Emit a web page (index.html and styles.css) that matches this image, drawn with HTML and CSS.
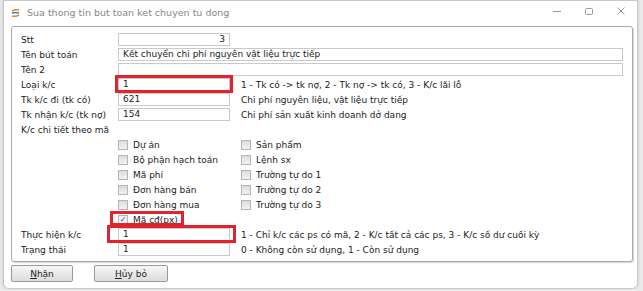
FILE: index.html
```html
<!DOCTYPE html>
<html lang="vi">
<head>
    <meta charset="UTF-8">
    <title>Sua thong tin but toan ket chuyen tu dong</title>
    <link rel="stylesheet" href="styles.css">
</head>
<body>
    <div class="window">
        <div class="titlebar">
            <svg class="app-icon" width="9" height="8" viewBox="0 0 9 8">
                <path d="M1 2 Q4 0 8 1" stroke="#f08a1c" stroke-width="1.6" fill="none"/>
                <path d="M1 4 Q4 3 8 4" stroke="#2a7fd4" stroke-width="1.6" fill="none"/>
                <path d="M1 7 Q5 8 8 6" stroke="#f08a1c" stroke-width="1.6" fill="none"/>
            </svg>
            <span class="title">Sua thong tin but toan ket chuyen tu dong</span>
            <div class="controls">
                <svg width="10" height="10" viewBox="0 0 10 10"><path d="M1 5.5H9" stroke="#999" stroke-width="1"/></svg>
                <svg width="10" height="10" viewBox="0 0 10 10"><rect x="1.5" y="2.5" width="7" height="6" stroke="#999" fill="none" rx="1"/></svg>
                <svg width="10" height="10" viewBox="0 0 10 10"><path d="M1.5 1.5L8.5 8.5M8.5 1.5L1.5 8.5" stroke="#999" stroke-width="1"/></svg>
            </div>
        </div>

        <div class="panel">
            <div class="row">
                <label>Stt</label>
                <div class="field num">3</div>
            </div>
            <div class="row">
                <label>Tên bút toán</label>
                <div class="field wide">Kết chuyển chi phí nguyên vật liệu trực tiếp</div>
            </div>
            <div class="row">
                <label>Tên 2</label>
                <div class="field wide"></div>
            </div>
            <div class="row">
                <label>Loại k/c</label>
                <div class="field">1</div>
                <span class="desc">1 - Tk có -&gt; tk nợ, 2 - Tk nợ -&gt; tk có, 3 - K/c lãi lỗ</span>
            </div>
            <div class="row">
                <label>Tk k/c đi (tk có)</label>
                <div class="field">621</div>
                <span class="desc">Chi phí nguyên liệu, vật liệu trực tiếp</span>
            </div>
            <div class="row">
                <label>Tk nhận k/c (tk nợ)</label>
                <div class="field">154</div>
                <span class="desc">Chi phí sản xuất kinh doanh dở dang</span>
            </div>
            <div class="row">
                <label class="long">K/c chi tiết theo mã</label>
            </div>

            <div class="checks">
                <div class="col">
                    <div class="check"><span class="box"></span>Dự án</div>
                    <div class="check"><span class="box"></span>Bộ phận hạch toán</div>
                    <div class="check"><span class="box"></span>Mã phí</div>
                    <div class="check"><span class="box"></span>Đơn hàng bán</div>
                    <div class="check"><span class="box"></span>Đơn hàng mua</div>
                    <div class="check"><span class="box on">&#10003;</span>Mã cđ(px)</div>
                </div>
                <div class="col">
                    <div class="check"><span class="box"></span>Sản phẩm</div>
                    <div class="check"><span class="box"></span>Lệnh sx</div>
                    <div class="check"><span class="box"></span>Trường tự do 1</div>
                    <div class="check"><span class="box"></span>Trường tự do 2</div>
                    <div class="check"><span class="box"></span>Trường tự do 3</div>
                </div>
            </div>

            <div class="row">
                <label>Thực hiện k/c</label>
                <div class="field">1</div>
                <span class="desc">1 - Chỉ k/c các ps có mã, 2 - K/c tất cả các ps, 3 - K/c số dư cuối kỳ</span>
            </div>
            <div class="row">
                <label>Trạng thái</label>
                <div class="field">1</div>
                <span class="desc">0 - Không còn sử dụng, 1 - Còn sử dụng</span>
            </div>

            <!-- red highlight marks -->
            <div class="mark mark-loai"></div>
            <div class="mark mark-cd"></div>
            <div class="mark mark-thuchien"></div>
        </div>

        <div class="buttons">
            <button class="btn btn-ok"><u>N</u>hận</button>
            <button class="btn btn-cancel"><u>H</u>ủy bỏ</button>
        </div>
    </div>
</body>
</html>
```

FILE: styles.css
```css
body {
    margin: 0;
    background: #e9e9e9;
    font-family: Tahoma, "DejaVu Sans", sans-serif;
    font-size: 9px;
    color: #222;
}
.window {
    margin-left: 3px;
    width: 635px;
    height: 289px;
    background: #fff;
    border: 1px solid #c8c8c8;
    border-radius: 0 0 6px 6px;
    box-sizing: border-box;
    box-shadow: 0 0 3px rgba(0,0,0,0.15);
}
.titlebar {
    height: 25px;
    display: flex;
    align-items: center;
    padding-left: 7px;
}
.app-icon {
    margin-right: 7px;
    margin-top: -2px;
}
.title {
    color: #888;
    font-size: 9.5px;
    margin-top: -2px;
}
.controls {
    margin-left: auto;
    display: flex;
    gap: 22px;
    padding-right: 11px;
    margin-top: -5px;
}
.panel {
    position: relative;
    margin-left: 7px;
    width: 622px;
    height: 236px;
    box-sizing: border-box;
    border: 1px solid #a9a9a9;
    border-radius: 3px;
    box-shadow: 1px 1px 1px #d4d4d4;
    padding: 5px 8px 0 9px;
}
.row {
    display: flex;
    align-items: center;
    height: 15px;
}
.row label {
    width: 97px;
    flex: none;
}
.row label.long {
    width: 200px;
}
.field {
    width: 112px;
    height: 13px;
    box-sizing: border-box;
    border: 1px solid #c9c9c9;
    padding: 0 4px;
    line-height: 11px;
    flex: none;
}
.field.num {
    text-align: right;
}
.field.wide {
    width: 505px;
}
.desc {
    margin-left: 11px;
    white-space: nowrap;
}
.checks {
    display: flex;
    padding-left: 97px;
}
.checks .col {
    width: 123px;
}
.check {
    height: 15px;
    display: flex;
    align-items: center;
}
.box {
    width: 8px;
    height: 8px;
    border: 1px solid #b5b5b5;
    background: linear-gradient(#dcdcdc, #f2f2f2);
    margin-right: 5px;
    font-size: 8px;
    line-height: 8px;
    text-align: center;
    color: #2a3f9c;
    font-weight: bold;
}
.box.on {
    background: #f4f4f4;
}
.mark {
    position: absolute;
    border: 3px solid #e0232c;
    box-sizing: border-box;
}
.mark-loai {
    left: 103px;
    top: 48px;
    width: 118px;
    height: 18px;
}
.mark-cd {
    left: 98px;
    top: 184px;
    width: 74px;
    height: 15px;
}
.mark-thuchien {
    left: 95px;
    top: 198px;
    width: 129px;
    height: 18px;
}
.buttons {
    display: flex;
    gap: 21px;
    padding: 3px 0 0 7px;
}
.btn {
    height: 17px;
    font-family: Tahoma, "DejaVu Sans", sans-serif;
    font-size: 9px;
    color: #222;
    border: 1px solid #9a9a9a;
    border-radius: 2px;
    background: linear-gradient(#f7f7f7, #dcdcdc);
    padding: 0;
}
.btn-ok {
    width: 62px;
}
.btn-cancel {
    width: 74px;
}
```
